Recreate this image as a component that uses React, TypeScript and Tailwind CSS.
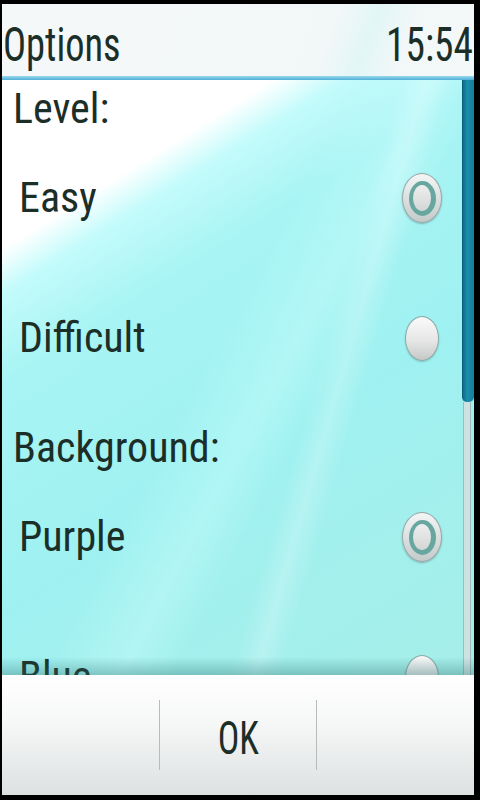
const font = 'font-["Roboto_Condensed","DejaVu_Sans_Condensed",sans-serif]';

function Radio({ checked }: { checked: boolean }) {
    if (checked) {
        return (
            <div className="flex h-[50px] w-[40px] items-center justify-center rounded-[50%] border border-[#9aa6a6] bg-[linear-gradient(180deg,#f4f6f6,#c4caca)] shadow-[0_1px_2px_rgba(0,0,0,0.25)]">
                <div className="flex h-[35px] w-[27px] items-center justify-center rounded-[50%] bg-[#68a6a0]">
                    <div className="h-[26px] w-[18px] rounded-[50%] bg-[linear-gradient(180deg,#eeeeee,#d4d6d6)]" />
                </div>
            </div>
        );
    }
    return (
        <div className="mr-[3px] h-[45px] w-[34px] rounded-[50%] border border-[#8aaaa6] bg-[linear-gradient(180deg,#fafafa_0%,#e6e6e6_55%,#c6c8c8_100%)] shadow-[0_1px_2px_rgba(0,0,0,0.2)]" />
    );
}

function Header({ label, className = '' }: { label: string; className?: string }) {
    return (
        <div className={`flex h-[38px] items-center pl-[11px] text-[42px] leading-[38px] text-[#1b2e27] ${className}`}>
            {label}
        </div>
    );
}

function Choice({ label, checked }: { label: string; checked: boolean }) {
    return (
        <div className="flex h-[140px] shrink-0 items-center justify-between pl-[17px] pr-[20px]">
            <span className="text-[42px] leading-[50px] text-[#1b2e27]">{label}</span>
            <Radio checked={checked} />
        </div>
    );
}

export default function App() {
    return (
        <div className={`flex h-[800px] w-[480px] flex-col bg-black pb-[5px] pl-[2px] pr-[6px] pt-[4px] ${font}`}>
            {/* title bar */}
            <div className="flex h-[72px] shrink-0 items-center justify-between bg-[linear-gradient(110deg,#f5f8f9_0%,#f2f7f8_68%,#e2f6f6_76%,#f2f7f8_84%,#f4f8f9_100%)] pl-[1px] pr-[1px] pt-[10px] text-[48px] leading-[50px] text-[#1b2e27]">
                <span className="inline-block origin-left scale-x-[0.8]">Options</span>
                <span className="inline-block origin-right scale-x-[0.82]">15:54</span>
            </div>
            <div className="h-[4px] shrink-0 bg-[linear-gradient(180deg,#9ad8ee,#4eb0d6)]" />

            {/* content */}
            <div className="relative flex min-h-0 flex-1 overflow-hidden bg-[linear-gradient(106deg,transparent_62%,rgba(255,255,255,0.22)_66%,transparent_70%),linear-gradient(118deg,transparent_45%,rgba(210,255,255,0.35)_55%,transparent_62%),linear-gradient(148deg,#ffffff_0%,#ffffff_19%,#c4fbfb_24%,#a8f4f4_34%,#9ff1f1_60%,#a6eee8_100%)]">
                <div className="flex min-w-0 flex-1 flex-col pt-[10px]">
                    <Header label="Level:" />
                    <Choice label="Easy" checked />
                    <Choice label="Difficult" checked={false} />
                    <Header label="Background:" className="mt-[21px]" />
                    <Choice label="Purple" checked />
                    <Choice label="Blue" checked={false} />
                </div>

                {/* scrollbar */}
                <div className="flex w-[12px] shrink-0 flex-col">
                    <div className="h-[322px] rounded-b-[5px] border-l border-[#0a5f78] bg-[linear-gradient(90deg,#0d6f8c,#1a8eac_40%,#147f9c)]" />
                    <div className="ml-[1px] w-[8px] flex-1 border-x border-[#9ebcbc] bg-[#cfe2e2]" />
                </div>

                {/* shadow under content at the bottom edge */}
                <div className="pointer-events-none absolute inset-x-0 bottom-0 h-[18px] bg-[linear-gradient(180deg,transparent,rgba(40,110,110,0.35))]" />
            </div>

            {/* softkey bar */}
            <div className="grid h-[120px] shrink-0 grid-cols-3 items-center bg-[linear-gradient(180deg,#ffffff_0%,#f6f7f7_40%,#dde1e1_100%)]">
                <div className="h-[70px]" />
                <div className="flex h-[70px] items-center justify-center border-x border-[#b6bcbc] pt-[6px] text-[46px] text-[#1b2e27]">
                    <span className="inline-block scale-x-[0.78]">OK</span>
                </div>
                <div className="h-[70px]" />
            </div>
        </div>
    );
}
